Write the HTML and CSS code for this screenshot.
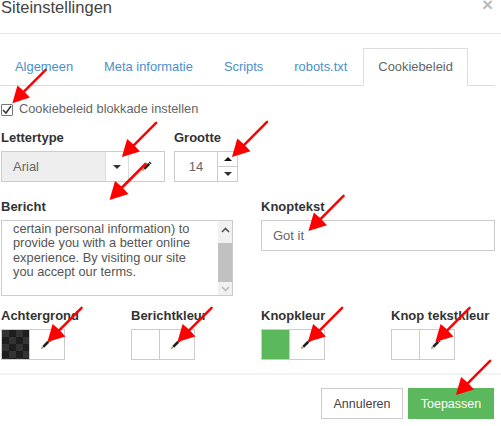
FILE: index.html
```html
<!DOCTYPE html>
<html lang="nl">
<head>
<meta charset="utf-8">
<title>Siteinstellingen</title>
<link rel="stylesheet" href="styles.css">
</head>
<body>
<svg width="0" height="0" class="defs">
  <symbol id="pen" viewBox="0 0 12 12">
    <path d="M1 11l1-3 2 2z" fill="#b08a50"/>
    <path d="M2.500 7.500L8 2l2 2-5.500 5.500z" fill="#222"/>
    <path d="M8.500 1.500l1-1 2 2-1 1z" fill="#222"/>
  </symbol>
  <symbol id="arrow" viewBox="0 0 40 40">
    <path d="M38 2L11 29" stroke="#f00" stroke-width="2.600" stroke-linecap="round" fill="none"/>
    <path d="M2 38L7.500 19 14 24.500 21 32z" fill="#f00"/>
  </symbol>
</svg>
<div class="modal">
  <header class="head">
    <h1 class="title">Siteinstellingen</h1>
    <span class="close">×</span>
  </header>
  <nav class="tabs">
    <a class="tab">Algemeen</a>
    <a class="tab">Meta informatie</a>
    <a class="tab">Scripts</a>
    <a class="tab">robots.txt</a>
    <a class="tab active">Cookiebeleid</a>
  </nav>
  <label class="check"><span class="box"><svg width="10" height="10" viewBox="0 0 10 10"><path d="M1 5l3 3 5-7" fill="none" stroke="#333" stroke-width="1.500"/></svg></span>Cookiebeleid blokkade instellen</label>
  <div class="font-row">
    <div class="field">
      <div class="lbl">Lettertype</div>
      <div class="group font-group">
        <div class="cell font-name">Arial</div>
        <div class="cell caret-cell"><span class="caret"></span></div>
        <div class="cell pen-cell"><svg class="pen"><use href="#pen"/></svg></div>
      </div>
    </div>
    <div class="field">
      <div class="lbl">Grootte</div>
      <div class="group size-group">
        <div class="cell size-val">14</div>
        <div class="spin">
          <div class="spin-btn"><span class="caret up"></span></div>
          <div class="spin-btn"><span class="caret"></span></div>
        </div>
      </div>
    </div>
  </div>
  <div class="msg-row">
    <div class="field">
      <div class="lbl">Bericht</div>
      <div class="area">
        <div class="area-clip"><p class="area-text">We use cookies (and gather<br>certain personal information) to provide you with a better online experience. By visiting our site you accept our terms.</p></div>
        <div class="scroll">
          <span class="sb-end"><svg width="9" height="6" viewBox="0 0 9 6"><path d="M1 5l3.500-3.500L8 5" fill="none" stroke="#555" stroke-width="1.600"/></svg></span>
          <span class="sb-thumb"></span>
          <span class="sb-end sb-down"><svg width="9" height="6" viewBox="0 0 9 6"><path d="M1 1l3.500 3.500L8 1" fill="none" stroke="#bbb" stroke-width="1.600"/></svg></span>
        </div>
      </div>
    </div>
    <div class="field">
      <div class="lbl">Knoptekst</div>
      <div class="text-input">Got it</div>
    </div>
  </div>
  <div class="colors">
    <div class="field">
      <div class="lbl">Achtergrond</div>
      <div class="group swatch-group"><div class="swatch dark"></div><div class="cell swatch-pen"><svg class="pen"><use href="#pen"/></svg></div></div>
    </div>
    <div class="field">
      <div class="lbl">Berichtkleur</div>
      <div class="group swatch-group"><div class="swatch"></div><div class="cell swatch-pen"><svg class="pen"><use href="#pen"/></svg></div></div>
    </div>
    <div class="field">
      <div class="lbl">Knopkleur</div>
      <div class="group swatch-group"><div class="swatch green"></div><div class="cell swatch-pen"><svg class="pen"><use href="#pen"/></svg></div></div>
    </div>
    <div class="field">
      <div class="lbl">Knop tekstkleur</div>
      <div class="group swatch-group"><div class="swatch"></div><div class="cell swatch-pen"><svg class="pen"><use href="#pen"/></svg></div></div>
    </div>
  </div>
  <footer class="foot">
    <button class="btn cancel">Annuleren</button>
    <button class="btn apply">Toepassen</button>
  </footer>
</div>
<svg class="arrows" width="501" height="426" viewBox="0 0 501 426">
  <use href="#arrow" x="10" y="68" width="38" height="37"/>
  <use href="#arrow" x="120" y="121" width="38" height="38"/>
  <use href="#arrow" x="230" y="120" width="39" height="39"/>
  <use href="#arrow" x="107" y="162" width="41" height="40"/>
  <use href="#arrow" x="306" y="194" width="40" height="39"/>
  <use href="#arrow" x="45" y="306" width="39" height="38"/>
  <use href="#arrow" x="175" y="306" width="39" height="38"/>
  <use href="#arrow" x="305" y="306" width="40" height="38"/>
  <use href="#arrow" x="433" y="306" width="39" height="38"/>
  <use href="#arrow" x="454" y="359" width="38" height="38"/>
</svg>
</body>
</html>
```
FILE: styles.css
```css
* { box-sizing: border-box; }
html, body { margin: 0; padding: 0; }
body {
  width: 501px;
  height: 426px;
  overflow: hidden;
  background: #fff;
  font-family: "Liberation Sans", Arial, sans-serif;
  font-size: 13px;
  color: #666;
  position: relative;
}
.defs { position: absolute; }
.modal { width: 501px; height: 426px; }
.head {
  height: 34px;
  border-bottom: 1px solid #e5e5e5;
  display: flex;
  justify-content: space-between;
  padding: 0 8px 0 1px;
}
.title {
  margin: 0;
  font-size: 16.500px;
  font-weight: 400;
  line-height: 15px;
  color: #444;
}
.close {
  font-size: 19px;
  font-weight: 700;
  line-height: 9px;
  color: #bbb;
}
.tabs {
  display: flex;
  gap: 1px;
  width: 495px;
  height: 52px;
  padding-top: 14px;
  border-bottom: 1px solid #ddd;
  font-size: 12.900px;
}
.tab {
  height: 38px;
  padding: 11px 15px 0;
  color: #4a8fcb;
  white-space: nowrap;
}
.active {
  color: #666;
  background: #fff;
  border: 1px solid #ddd;
  border-bottom-color: #fff;
  padding: 10px 14px 0;
}
.check {
  display: flex;
  align-items: center;
  height: 14px;
  margin: 16px 0 0 1px;
  line-height: 14px;
  font-size: 12.800px;
}
.box {
  display: flex;
  align-items: center;
  justify-content: center;
  width: 12px;
  height: 12px;
  margin: 1px 6px 0 0;
  border: 1px solid #777;
  border-radius: 1px;
}
.font-row {
  display: flex;
  gap: 9px;
  margin: 14px 0 0 1px;
}
.lbl {
  height: 15px;
  line-height: 15px;
  margin-bottom: 6px;
  font-weight: 700;
  font-size: 13px;
  color: #333;
  white-space: nowrap;
}
.group {
  display: flex;
  height: 31px;
  border: 1px solid #ccc;
}
.font-group { width: 164px; }
.cell {
  display: flex;
  align-items: center;
  justify-content: center;
}
.font-name {
  width: 104px;
  justify-content: flex-start;
  padding-left: 11px;
  background: #eee;
  border-right: 1px solid #ddd;
}
.caret-cell { width: 22px; }
.pen-cell { flex: 1; border-left: 1px solid #ddd; }
.pen { width: 11px; height: 11px; }
.caret {
  display: block;
  width: 0;
  height: 0;
  border-left: 4px solid transparent;
  border-right: 4px solid transparent;
  border-top: 4px solid #333;
}
.caret.up { border-top: 0; border-bottom: 4px solid #111; }
.size-group { width: 64px; }
.size-val { flex: 1; }
.spin {
  width: 20px;
  display: flex;
  flex-direction: column;
  border-left: 1px solid #ccc;
}
.spin-btn {
  flex: 1;
  display: flex;
  align-items: center;
  justify-content: center;
}
.spin-btn + .spin-btn { border-top: 1px solid #ccc; }
.msg-row {
  display: flex;
  gap: 28px;
  height: 109px;
  margin: 17px 0 0 1px;
}
.area {
  width: 232px;
  height: 76px;
  display: flex;
  border: 1px solid #ccc;
}
.area-clip {
  flex: 1;
  overflow: hidden;
}
.area-text {
  margin: -14px 0 0;
  padding: 0 8px 0 11px;
  line-height: 14.600px;
  font-size: 12.800px;
  color: #555;
}
.scroll {
  width: 14px;
  flex: none;
  display: flex;
  flex-direction: column;
  background: #f1f1f1;
}
.sb-end {
  height: 17px;
  display: flex;
  align-items: center;
  justify-content: center;
  flex: none;
}
.sb-down { height: 13px; }
.sb-thumb { flex: 1; background: #c1c1c1; margin-top: 5px; }
.text-input {
  width: 234px;
  height: 31px;
  border: 1px solid #ccc;
  padding: 7px 11px;
  line-height: 15px;
}
.colors {
  display: grid;
  grid-template-columns: repeat(4, 130px);
  margin: 0 0 0 1px;
}
.swatch-group { width: 64px; }
.swatch { width: 28px; border-right: 1px solid #ccc; }
.swatch-pen { flex: 1; padding-right: 4px; }
.dark {
  background: repeating-conic-gradient(#1e1e1e 0 25%, #333 0 50%) 0 0 / 14px 14px;
}
.green { background: #5cb85c; }
.foot {
  display: flex;
  justify-content: flex-end;
  gap: 5px;
  margin-top: 13px;
  padding: 13px 7px 0 0;
  border-top: 2px solid #f2f2f2;
}
.btn {
  height: 31px;
  padding: 0;
  font: 12.500px "Liberation Sans", Arial, sans-serif;
  cursor: pointer;
}
.cancel { width: 82px; background: #fff; border: 1px solid #ccc; color: #444; }
.apply { width: 86px; background: #5cb85c; border: 1px solid #5cb85c; color: #fff; }
.arrows { position: absolute; left: 0; top: 0; pointer-events: none; }
```
